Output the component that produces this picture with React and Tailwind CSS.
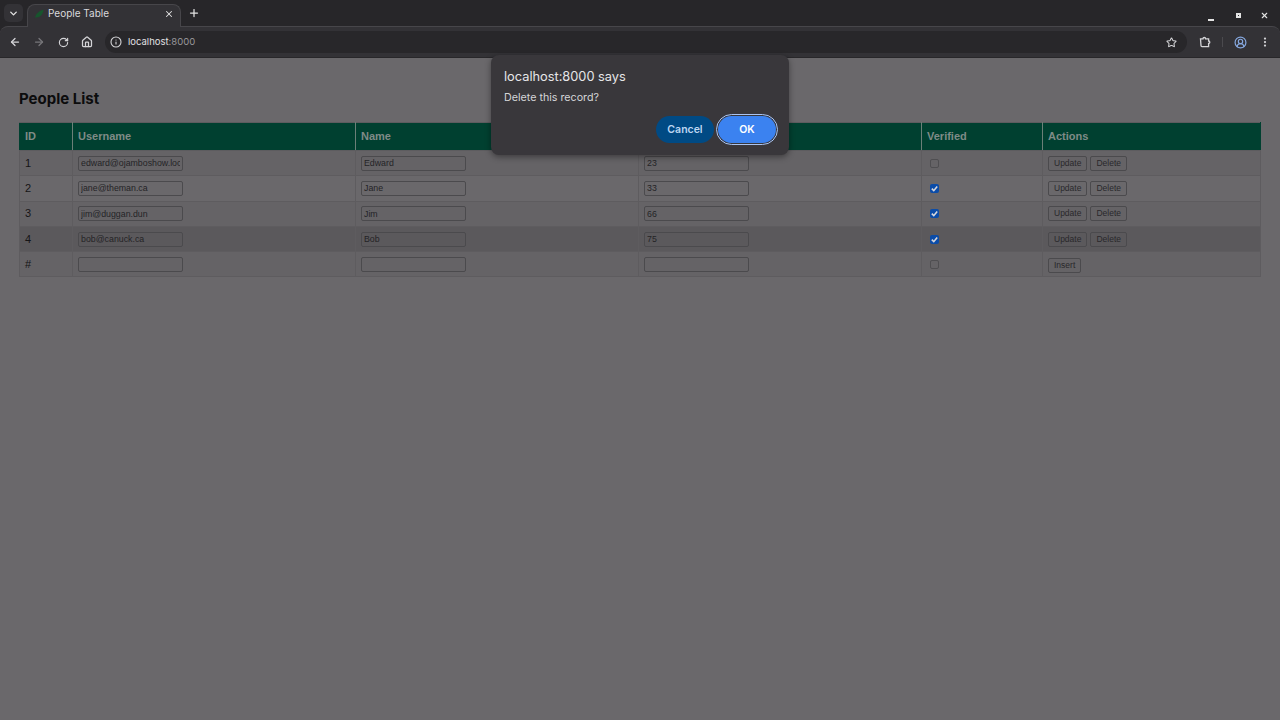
import React from "react";
import { ArrowLeft, ArrowRight, RotateCw, Home, Info, Star, EllipsisVertical, ChevronDown, X, Plus, CircleUserRound } from "lucide-react";

const people = [
  { id: "1", username: "edward@ojamboshow.local", name: "Edward", age: "23", verified: false, bg: "bg-[#656366]" },
  { id: "2", username: "jane@theman.ca", name: "Jane", age: "33", verified: true, bg: "bg-[#6a686b]" },
  { id: "3", username: "jim@duggan.dun", name: "Jim", age: "66", verified: true, bg: "bg-[#656366]" },
  { id: "4", username: "bob@canuck.ca", name: "Bob", age: "75", verified: true, bg: "bg-[#5b595c]" },
];

function Field({ value }) {
  return (
    <input
      readOnly
      value={value}
      className="block w-[105px] h-[15px] px-[2px] border border-[#4b4a4d] rounded-[2px] bg-transparent text-[8.8px] text-[#242326] outline-none font-['Liberation_Sans',sans-serif]"
    />
  );
}

function Btn({ children }) {
  return (
    <button className="h-[15px] px-[5px] border border-[#4b4a4d] rounded-[2px] bg-transparent text-[8.5px] leading-none text-[#29282b] font-['Liberation_Sans',sans-serif]">
      {children}
    </button>
  );
}

function Check({ on }) {
  if (on) {
    return (
      <span className="flex items-center justify-center w-[9px] h-[9px] rounded-[2px] bg-[#0b4ca8]">
        <svg viewBox="0 0 10 10" className="w-[9px] h-[9px]" fill="none" stroke="#d8d8dc" strokeWidth="1.8">
          <path d="M2 5.2 4.2 7.4 8 2.8" />
        </svg>
      </span>
    );
  }
  return <span className="block w-[9px] h-[9px] rounded-[2px] border border-[#4f4e51]" />;
}

function Row({ p }) {
  const td = "border border-[#5e5c5f] px-[5px] align-middle";
  return (
    <tr className={`h-[25.3px] ${p.bg}`}>
      <td className={td}>{p.id}</td>
      <td className={td}><Field value={p.username} /></td>
      <td className={td}><Field value={p.name} /></td>
      <td className={td}><Field value={p.age} /></td>
      <td className={td}><span className="block ml-[3px]"><Check on={p.verified} /></span></td>
      <td className={td}>
        {p.id === "#" ? (
          <Btn>Insert</Btn>
        ) : (
          <div className="flex gap-[3px]">
            <Btn>Update</Btn>
            <Btn>Delete</Btn>
          </div>
        )}
      </td>
    </tr>
  );
}

export default function App() {
  return (
    <div className="relative flex flex-col h-[720px] overflow-hidden bg-[#6a686b] font-['Liberation_Sans',sans-serif]">
      <div className="bg-[#272629] font-['Inter',sans-serif]">
        {/* Tab strip */}
        <div className="flex items-start h-[26px] pl-[4px] pt-[4px]">
          <div className="flex items-center justify-center w-[19px] h-[18px] rounded-[5px] bg-[#333236] text-[#e3e3e3]">
            <ChevronDown size={11} strokeWidth={3} />
          </div>
          <div className="relative z-10 flex items-center w-[154px] h-[23px] ml-[4px] pb-[5px] pl-[6px] pr-[6px] rounded-t-[8px] bg-[#333236] border-t border-x border-[#47464a] border-b-0">
            <svg viewBox="0 0 12 12" className="w-[10px] h-[10px]">
              <path d="M0.5 11.5 3 6Q6 2 11.5 0.5 11 6 7 9 4 10.5 2 10Z" fill="#17552d" />
            </svg>
            <span className="ml-[4px] text-[10px] text-[#d9d9dc]">People Table</span>
            <X size={10} strokeWidth={2.5} className="ml-auto text-[#e3e3e3]" />
          </div>
          <Plus size={12} strokeWidth={2.5} className="ml-[7px] mt-[3px] text-[#e3e3e3]" />
          <div className="flex items-center ml-auto mr-[11px] mt-[6px] text-[#e3e3e3]">
            <span className="block w-[6px] h-[2px] mt-[9px] bg-[#e3e3e3]" />
            <span className="block w-[5px] h-[5px] ml-[22px] border-[2px] border-[#e3e3e3]" />
            <X size={9} strokeWidth={3} className="ml-[19px]" />
          </div>
        </div>

        {/* Toolbar */}
        <div className="flex items-center h-[32px] pl-[9px] pr-[9px] rounded-t-[8px] bg-[#333236] border-t border-b border-t-[#47464a] border-b-[#28272a] text-[#d5d5d8]">
          <ArrowLeft size={12} strokeWidth={2.5} />
          <ArrowRight size={12} strokeWidth={2.5} className="ml-[12px] text-[#77767a]" />
          <RotateCw size={11} strokeWidth={2.5} className="ml-[13px]" />
          <Home size={12} strokeWidth={2.5} className="ml-[12px]" />
          <div className="flex items-center h-[22px] ml-[12px] pl-[5px] flex-1 rounded-full bg-[#28272a]">
            <Info size={12} strokeWidth={2.2} />
            <span className="ml-[6px] text-[9.5px] text-[#e0e0e3]">localhost<span className="text-[#98979b]">:8000</span></span>
            <Star size={11} strokeWidth={2.2} className="ml-auto mr-[10px]" />
          </div>
          <svg viewBox="0 0 12 12" className="w-[12px] h-[12px] ml-[12px]" fill="none" stroke="currentColor" strokeWidth="1.3">
            <path d="M1.5 2.8H4A1.3 1.3 0 0 1 6.6 2.8H9.6V5A1.2 1.2 0 0 1 9.6 7.4V10.6H3Q2 10.6 2 9.6Z" />
          </svg>
          <span className="ml-[11px] w-px h-[10px] bg-[#4b4a4e]" />
          <CircleUserRound size={13} strokeWidth={2.2} className="ml-[11px] text-[#86a8df]" />
          <EllipsisVertical size={12} strokeWidth={2.5} className="ml-[12px]" />
        </div>
      </div>

      {/* Page */}
      <div className="px-[19px] pt-[32px] text-[11px] text-[#151416]">
        <h2 className="mb-[14px] text-[15px] leading-[18px] font-bold text-[#0c0c0d] font-['Inter',sans-serif]">People List</h2>
        <table className="w-[1241px] table-fixed border-collapse">
          <colgroup>
            <col className="w-[53px]" />
            <col className="w-[283px]" />
            <col className="w-[283px]" />
            <col className="w-[283px]" />
            <col className="w-[121px]" />
            <col className="w-[218px]" />
          </colgroup>
          <thead>
            <tr className="h-[28px] bg-[#004030] text-[#7f8b87] text-left">
              {["ID", "Username", "Name", "Age", "Verified", "Actions"].map((h) => (
                <th
                  key={h}
                  className="border-y border-x border-y-[#5d5c5f] border-x-[#6c7f78] first:border-l-[#004030] last:border-r-[#004030] px-[5px] text-[11px] font-bold"
                >
                  {h}
                </th>
              ))}
            </tr>
          </thead>
          <tbody>
            {people.map((p) => <Row key={p.id} p={p} />)}
            <Row p={{ id: "#", username: "", name: "", age: "", verified: false, bg: "bg-[#656366]" }} />
          </tbody>
        </table>
      </div>

      {/* Alert dialog */}
      <div className="absolute left-[491px] top-[55px] w-[298px] h-[100px] px-[13px] pt-[13px] rounded-[8px] bg-[#39373b] shadow-[0_2px_6px_rgba(0,0,0,0.4)] font-['Inter',sans-serif]">
        <div className="text-[12.8px] leading-[17px] text-[#e6e6e8]">localhost:8000 says</div>
        <div className="mt-[6px] text-[10.7px] leading-[14px] text-[#d5d5d8]">Delete this record?</div>
        <div className="flex justify-end items-center gap-[4px] mt-[11px]">
          <button className="w-[58px] h-[27px] rounded-full bg-[#004a84] text-[10.5px] font-semibold text-[#bcd6f2]">Cancel</button>
          <button className="w-[58px] h-[27px] rounded-full bg-[#3b82f0] text-[10.5px] font-semibold text-white outline outline-[1.5px] outline-offset-[1.5px] outline-[#a9c4f2]">OK</button>
        </div>
      </div>
    </div>
  );
}
